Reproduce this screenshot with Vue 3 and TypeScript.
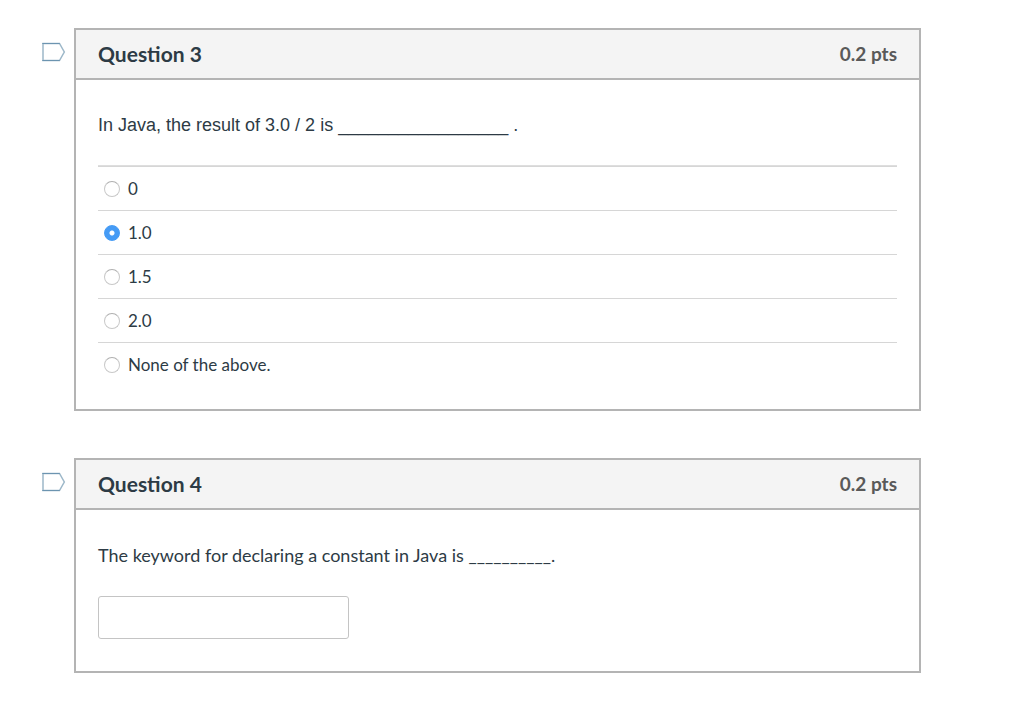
<script setup lang="ts">
import { ref } from 'vue'

interface Question {
  id: number
  points: string
  prompt: string
  plain?: boolean
  options?: string[]
}

const questions: Question[] = [
  {
    id: 3,
    points: '0.2 pts',
    prompt: 'In Java, the result of 3.0 / 2 is ' + '_'.repeat(17) + ' .',
    plain: true,
    options: ['0', '1.0', '1.5', '2.0', 'None of the above.'],
  },
  {
    id: 4,
    points: '0.2 pts',
    prompt: 'The keyword for declaring a constant in Java is ' + '_'.repeat(10) + '.',
  },
]

const selected = ref('1.0')
const answer = ref('')
const flagged = ref<number[]>([])

function toggleFlag(id: number) {
  flagged.value = flagged.value.includes(id)
    ? flagged.value.filter((n) => n !== id)
    : [...flagged.value, id]
}
</script>

<template>
  <main class="quiz">
    <section v-for="q in questions" :key="q.id" class="question">
      <button
        type="button"
        class="flag"
        :aria-label="`Flag question ${q.id}`"
        :aria-pressed="flagged.includes(q.id)"
        @click="toggleFlag(q.id)"
      >
        <svg width="24" height="20" viewBox="0 0 24 20" fill="none" aria-hidden="true">
          <path d="M1 1.5H17.5L22.3 10L17.5 18.5H1Z" stroke="#9db8c9" stroke-width="1.5" />
          <path d="M.3 1.5H17.8M.3 18.5H17.8" stroke="#6c94b0" stroke-width="1" />
        </svg>
      </button>
      <div class="card">
        <header class="head">
          <h2 class="title">Question {{ q.id }}</h2>
          <span class="points">{{ q.points }}</span>
        </header>
        <div class="body">
          <p :id="`prompt-${q.id}`" class="prompt" :class="{ plain: q.plain }">{{ q.prompt }}</p>
          <div v-if="q.options" class="options" role="radiogroup" :aria-labelledby="`prompt-${q.id}`">
            <label v-for="option in q.options" :key="option" class="option">
              <input v-model="selected" class="radio" type="radio" :name="`question-${q.id}`" :value="option" />
              <span>{{ option }}</span>
            </label>
          </div>
          <input v-else v-model="answer" class="answer" type="text" :aria-labelledby="`prompt-${q.id}`" />
        </div>
      </div>
    </section>
  </main>
</template>

<style>
body {
  margin: 0;
  background: #fff;
}
</style>

<style scoped>
.quiz {
  display: flex;
  flex-direction: column;
  gap: 47px;
  padding: 28px 103px 40px 40px;
  color: #2d3b45;
  font-family: Lato, 'Liberation Sans', sans-serif;
}

.question {
  display: flex;
  align-items: flex-start;
  gap: 8px;
}

.flag {
  display: flex;
  flex: none;
  width: 26px;
  margin: 14px 0 0;
  padding: 0 0 0 2px;
  border: 0;
  background: none;
  cursor: pointer;
}

.flag svg {
  flex: none;
}

.card {
  flex: 1;
  min-width: 0;
  box-sizing: border-box;
  border: 2px solid #b4b4b4;
}

.head {
  display: flex;
  align-items: center;
  justify-content: space-between;
  height: 48px;
  padding: 0 22px;
  border-bottom: 2px solid #b4b4b4;
  background: #f4f4f4;
}

.title {
  margin: 0;
  font-size: 21px;
  line-height: 24px;
  font-weight: 700;
}

.points {
  color: #595959;
  font-size: 19px;
  line-height: 24px;
  font-weight: 700;
}

.body {
  padding: 32px 22px;
}

.prompt {
  margin: 0 0 28px;
  font-size: 18px;
  line-height: 26px;
}

.plain {
  font-family: 'Liberation Sans', Arial, sans-serif;
}

.options {
  border-top: 1px solid #dedede;
  margin: -1px 0 -9px;
}

.option {
  display: flex;
  align-items: center;
  gap: 8px;
  box-sizing: border-box;
  min-height: 44px;
  padding-left: 6px;
  border-top: 1px solid #d6d6d6;
  font-size: 17px;
  line-height: 24px;
}

.radio {
  appearance: none;
  flex: none;
  width: 16px;
  height: 16px;
  margin: 0;
  border: 1px solid #c8c8c8;
  border-top-color: #b0b0b0;
  border-radius: 50%;
  background: #fff;
}

.radio:checked {
  border-color: #459bf5;
  background: radial-gradient(circle, #fff 2px, #459bf5 3px);
}

.answer {
  display: block;
  box-sizing: border-box;
  width: 251px;
  max-width: 100%;
  height: 43px;
  margin: 0;
  padding: 8px;
  border: 1px solid #c4c4c4;
  border-radius: 3px;
  background: #fff;
  color: inherit;
  font: inherit;
  font-size: 18px;
}
</style>
